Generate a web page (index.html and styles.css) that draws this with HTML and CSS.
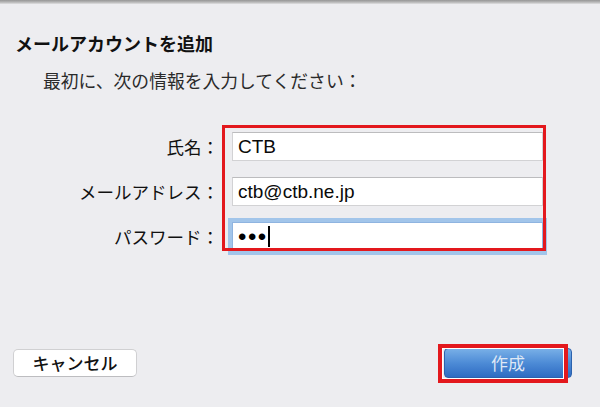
FILE: index.html
```html
<!DOCTYPE html>
<html lang="ja">
<head>
<meta charset="utf-8">
<title>メールアカウントを追加</title>
<link rel="stylesheet" href="styles.css">
</head>
<body>
<div class="topbar"></div>
<div class="dialog">
  <h1 class="title">メールアカウントを追加</h1>
  <p class="subtitle">最初に、次の情報を入力してください：</p>
  <div class="form">
    <div class="label">氏名：</div>
    <div class="field">CTB</div>
    <div class="label">メールアドレス：</div>
    <div class="field">ctb@ctb.ne.jp</div>
    <div class="label">パスワード：</div>
    <div class="field focused"><span class="dots">•••</span><span class="caret"></span></div>
    <div class="highlight highlight-fields"></div>
  </div>
  <div class="footer">
    <button class="btn btn-cancel">キャンセル</button>
    <div class="create-wrap">
      <button class="btn btn-create">作成</button>
      <div class="highlight highlight-create"></div>
    </div>
  </div>
</div>
</body>
</html>
```
FILE: styles.css
```css
html, body {
  margin: 0;
  padding: 0;
}
body {
  width: 600px;
  height: 407px;
  background: #ededf0;
  font-family: "Noto Sans CJK JP", "Noto Sans", sans-serif;
  color: #1a1a1a;
  overflow: hidden;
}
.topbar {
  height: 4px;
  background: linear-gradient(#969696, #b8b8b8 55%, #e0e0e2);
}
.dialog {
  display: flex;
  flex-direction: column;
}
.title {
  margin: 27px 0 0 15px;
  font-size: 18px;
  line-height: 24px;
  font-weight: 700;
  color: #111;
}
.subtitle {
  margin: 13px 0 0 43px;
  font-size: 17.8px;
  line-height: 24px;
  color: #2a2a2a;
}
.form {
  position: relative;
  margin-top: 40px;
  display: grid;
  grid-template-columns: 219px 311px;
  grid-auto-rows: 29px;
  column-gap: 13px;
  row-gap: 16px;
}
.label {
  text-align: right;
  font-size: 17.5px;
  line-height: 29px;
  color: #111;
  white-space: nowrap;
}
.field {
  box-sizing: border-box;
  height: 29px;
  background: #fff;
  border: 1px solid #d2d2d4;
  border-top-color: #bcbcbe;
  padding-left: 5px;
  font-family: "Liberation Sans", "Noto Sans CJK JP", sans-serif;
  font-size: 19px;
  line-height: 27px;
  color: #0a0a0a;
  display: flex;
  align-items: center;
}
.field.focused {
  border-color: #8fb4e0;
  box-shadow: 0 0 0 4px #a2c5ea;
}
.dots {
  font-size: 24px;
  letter-spacing: 1.5px;
  color: #000;
}
.caret {
  display: inline-block;
  width: 2px;
  height: 21px;
  background: #000;
}
.highlight {
  position: absolute;
  box-sizing: border-box;
  border: 3px solid #e3181d;
  pointer-events: none;
}
.highlight-fields {
  left: 222px;
  top: -7px;
  width: 324px;
  height: 126px;
}
.footer {
  margin-top: 97px;
  padding: 0 28px 0 13px;
  display: flex;
  justify-content: space-between;
  align-items: center;
}
.btn {
  font-family: "Noto Sans CJK JP", sans-serif;
  font-size: 17px;
  border-radius: 5px;
  padding: 0;
  margin: 0;
}
.btn-cancel {
  width: 124px;
  height: 28px;
  background: #fff;
  border: 1px solid #d0d0d2;
  border-bottom-color: #bdbdc0;
  color: #111;
  font-weight: 500;
  line-height: 26px;
}
.create-wrap {
  position: relative;
}
.btn-create {
  display: block;
  width: 128px;
  height: 30px;
  border: 1px solid #2c62ad;
  border-radius: 4px;
  background: linear-gradient(#78afe7, #4d8bd6 50%, #2f6cc2);
  color: #dfe8f5;
  line-height: 28px;
}
.highlight-create {
  left: -6px;
  top: -4px;
  width: 130px;
  height: 39px;
  border-width: 4px;
  box-shadow: inset 0 0 0 1px #fff;
}
```
